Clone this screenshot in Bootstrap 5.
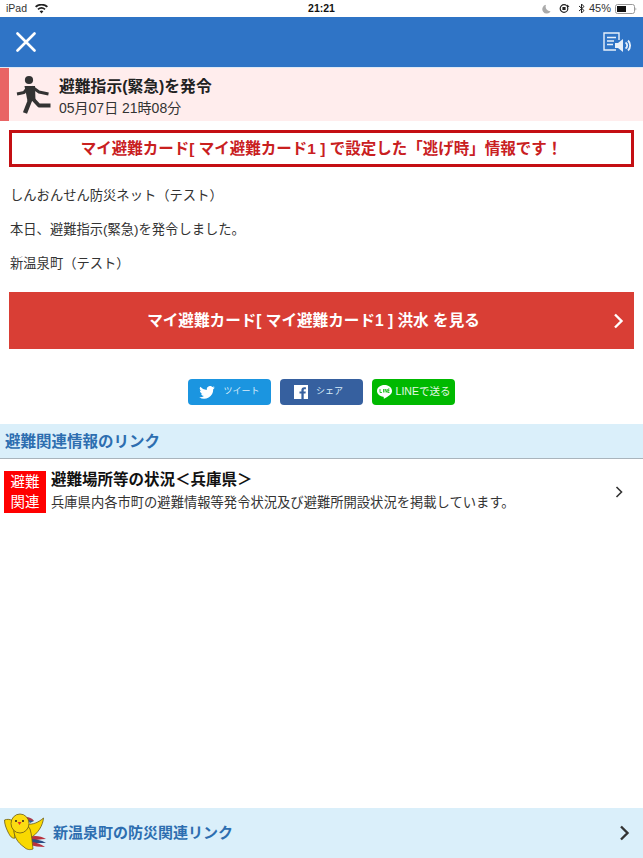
<!DOCTYPE html>
<html lang="ja">
<head>
    <meta charset="UTF-8">
    <title>避難指示</title>
    <link href="https://cdn.jsdelivr.net/npm/bootstrap@5.3.3/dist/css/bootstrap.min.css" rel="stylesheet">
    <style>
        html, body { height: 100%; }
        body {
            font-family: "Liberation Sans", "Noto Sans CJK JP", sans-serif;
            color: #333;
            font-size: 13px;
        }
        .screen { height: 858px; width: 643px; overflow: hidden; }
        .status-bar { height: 17px; font-size: 10.5px; color: #333; padding: 0 6px; line-height: 17px; }
        .status-time { font-size: 10.5px; font-weight: 600; color: #111; }
        .status-left, .status-right { width: 180px; }
        .status-pct { font-size: 11px; }
        .top-bar { height: 50px; background: #2f74c6; padding: 0 12px 0 16px; border-bottom: 1px solid #dfe9f5; box-sizing: content-box; }
        .alert-head { height: 53px; background: #ffeded; border-left: 9px solid #e96464; padding-left: 1px; }
        .runner { flex: none; margin-right: 4px; }
        .alert-text { padding-top: 5px; }
        .alert-title { font-size: 15.8px; font-weight: 700; line-height: 20px; color: #222; }
        .alert-date { font-size: 14px; line-height: 20px; color: #333; margin-top: 1px; }
        .notice-box { height: 37px; margin: 9px 9px 0 9px; border: 3px solid #c40f13; color: #c9201f; font-size: 15.5px; font-weight: 700; line-height: 1; }
        .msg-body { padding: 20px 10px 0; }
        .msg-body p { margin: 0 0 16px; font-size: 13.3px; line-height: 18px; color: #333; }
        .red-btn { height: 57px; margin: 3px 9px 0; background: #d93e35; color: #fff; font-size: 15.6px; font-weight: 700; padding: 0 10px 0 0; }
        .red-btn-label { flex: 1; text-align: center; padding-left: 5px; }
        .share-row { margin-top: 30px; gap: 9px; }
        .share-btn { width: 83px; height: 26px; border-radius: 4px; color: #d9ecfa; font-size: 9px; }
        .share-tw { background: #1b95e0; }
        .share-fb { background: #36609f; padding-right: 6px; }
        .share-line { background: #00b900; color: #e4f8e4; font-size: 10.5px; }
        .sec-head { height: 32px; padding-top: 2px; margin-top: 19px; background: #daeffa; border-bottom: 1px solid #a9b4bc; box-sizing: content-box; padding-left: 5px; color: #2d6eb0; font-size: 15.5px; font-weight: 700; }
        .link-row { height: 54px; padding: 0 20px 0 4px; margin-top: 6px; }
        .hinan-tag { width: 42px; height: 42px; background: #f00; color: #fff; font-size: 14.5px; line-height: 20px; text-align: center; flex: none; padding-top: 1px; }
        .link-text { margin-left: 1px; }
        .link-title { font-size: 15.5px; font-weight: 700; line-height: 20px; color: #111; margin-top: -3px; }
        .link-desc { font-size: 13.3px; line-height: 18px; color: #333; white-space: nowrap; margin-top: 4px; }
        .spacer-area { flex: 1; }
        .foot-bar { height: 50px; background: #daeffa; color: #2d6eb0; font-size: 15px; font-weight: 700; padding: 0 13px 0 0; }
        .foot-bird { flex: none; margin-right: 3px; }
    </style>
</head>
<body>
    <div class="screen d-flex flex-column">
        <div class="status-bar d-flex justify-content-between align-items-center">
            <div class="status-left d-flex align-items-center gap-2">
                <span>iPad</span>
                <svg width="13" height="10" viewBox="0 0 13 10"><path d="M6.5 9.5 4.6 7.3a3 3 0 0 1 3.8 0zM3.5 6 2.4 4.7a6.4 6.4 0 0 1 8.2 0L9.5 6a4.7 4.7 0 0 0-6 0zM1.3 3.5 0 2.2a9.8 9.8 0 0 1 13 0l-1.3 1.3a8 8 0 0 0-10.4 0z" fill="#222"/></svg>
            </div>
            <span class="status-time">21:21</span>
            <div class="status-right d-flex align-items-center justify-content-end gap-1">
                <svg class="me-1" width="9" height="10" viewBox="0 0 9 10"><path d="M4 .8a4.4 4.4 0 1 0 4.6 6.4A4.6 4.6 0 0 1 4 .8z" fill="#aaa"/></svg>
                <svg width="11" height="11" viewBox="0 0 11 11"><circle cx="5" cy="5.500" r="3.800" fill="none" stroke="#222" stroke-width="1.200"/><rect x="3.400" y="4" width="3.200" height="3" fill="#222"/><path d="M8 1.500 10.500 3.500 8 4.500z" fill="#222"/></svg>
                <svg class="ms-1" width="7" height="11" viewBox="0 0 7 11"><path d="M1 3 6 7.500 3.500 10V1L6 3.500 1 8" fill="none" stroke="#222" stroke-width="1"/></svg>
                <span class="status-pct">45%</span>
                <svg width="22" height="10" viewBox="0 0 22 10"><rect x=".5" y=".5" width="19" height="9" rx="2" fill="#fff" stroke="#999"/><rect x="2" y="2" width="9" height="6" fill="#111"/><path d="M20.500 3.500a2 2 0 0 1 0 3z" fill="#999"/></svg>
            </div>
        </div>

        <div class="top-bar d-flex justify-content-between align-items-center">
            <svg width="20" height="20" viewBox="0 0 20 20"><path d="M1.500 1.500 18.500 18.500M18.500 1.500 1.500 18.500" stroke="#fff" stroke-width="2.600" stroke-linecap="round"/></svg>
            <svg width="28" height="21" viewBox="0 0 28 21">
                <path d="M16 8V1H1v17h12" fill="none" stroke="#e8f0fa" stroke-width="1.400"/>
                <path d="M4 5.500h9M4 9h7M4 12.500h6" stroke="#e8f0fa" stroke-width="1.400"/>
                <path d="M12 11h3l5-4v13l-5-4h-3z" fill="#e8f0fa"/>
                <path d="M22.500 10.500a3.500 3.500 0 0 1 0 6M25 8.500a7 7 0 0 1 0 10" fill="none" stroke="#e8f0fa" stroke-width="1.800"/>
            </svg>
        </div>

        <div class="alert-head d-flex align-items-center">
            <svg class="runner" width="45" height="48" viewBox="0 0 45 48">
                <circle cx="19" cy="9" r="4.100" fill="#333"/>
                <path d="M14.500 15h10.500L25.500 30h-8z" fill="#333"/>
                <path d="M7 23 14 21.500 18 16.500M22 16 29 21 38.500 23" fill="none" stroke="#333" stroke-width="3" stroke-linejoin="round"/>
                <path d="M20.500 28 15 42" fill="none" stroke="#333" stroke-width="4.400"/>
                <path d="M22 27 29 34.500 40.500 34.500" fill="none" stroke="#333" stroke-width="3.800" stroke-linejoin="round"/>
            </svg>
            <div class="alert-text">
                <div class="alert-title">避難指示(緊急)を発令</div>
                <div class="alert-date">05月07日 21時08分</div>
            </div>
        </div>

        <div class="notice-box d-flex align-items-center justify-content-center">マイ避難カード[ マイ避難カード1 ] で設定した「逃げ時」情報です！</div>

        <div class="msg-body">
            <p>しんおんせん防災ネット（テスト）</p>
            <p>本日、避難指示(緊急)を発令しました。</p>
            <p>新温泉町（テスト）</p>
        </div>

        <div class="red-btn d-flex align-items-center">
            <span class="red-btn-label">マイ避難カード[ マイ避難カード1 ] 洪水 を見る</span>
            <svg width="11" height="16" viewBox="0 0 11 16"><path d="M2 1.500 8.500 8 2 14.500" fill="none" stroke="#fff" stroke-width="2.400"/></svg>
        </div>

        <div class="share-row d-flex justify-content-center">
            <div class="share-btn share-tw d-flex align-items-center justify-content-center gap-2">
                <svg width="16" height="13" viewBox="0 0 24 20"><path d="M24 2.400a9.800 9.800 0 0 1-2.800.8A4.900 4.900 0 0 0 23.300.5a9.800 9.800 0 0 1-3.100 1.200 4.900 4.900 0 0 0-8.400 4.500A14 14 0 0 1 1.700 1a4.900 4.900 0 0 0 1.500 6.600 4.900 4.900 0 0 1-2.200-.6c0 2.400 1.700 4.400 3.900 4.900a4.900 4.900 0 0 1-2.200.1 4.900 4.900 0 0 0 4.600 3.400A9.900 9.900 0 0 1 0 17.400 14 14 0 0 0 21.500 5a10 10 0 0 0 2.500-2.600z" fill="#fff"/></svg>
                <span>ツイート</span>
            </div>
            <div class="share-btn share-fb d-flex align-items-center justify-content-center gap-2">
                <svg width="14" height="14" viewBox="0 0 14 14"><rect width="14" height="14" fill="#fff"/><path d="M9.700 14V8.600h1.800l.3-2.100H9.700V5.200c0-.6.200-1 1-1h1.200V2.300c-.2 0-.9-.1-1.700-.1-1.700 0-2.800 1-2.800 2.900v1.400H5.500v2.100h1.900V14z" fill="#36609f"/></svg>
                <span>シェア</span>
            </div>
            <div class="share-btn share-line d-flex align-items-center justify-content-center gap-1">
                <svg width="15" height="14" viewBox="0 0 15 14"><path d="M7.500 0C3.400 0 0 2.600 0 5.900c0 2.900 2.700 5.300 6.300 5.800.6.100.5.500.4 1.600 0 .4.300.6.800.3 1-.5 5.600-3.200 6.800-5C14.700 7.800 15 6.900 15 5.900 15 2.600 11.600 0 7.500 0z" fill="#fff"/><path d="M3 4v3.500h2M6.500 4v3.500M8 7.500V4l2 3.500V4M12.500 4H11v3.500h1.500M11 5.700h1.500" fill="none" stroke="#00b900" stroke-width=".8"/></svg>
                <span>LINEで送る</span>
            </div>
        </div>

        <div class="sec-head d-flex align-items-center">避難関連情報のリンク</div>

        <div class="link-row d-flex align-items-center gap-1">
            <div class="hinan-tag">避難<br>関連</div>
            <div class="link-text flex-grow-1">
                <div class="link-title">避難場所等の状況＜兵庫県＞</div>
                <div class="link-desc">兵庫県内各市町の避難情報等発令状況及び避難所開設状況を掲載しています。</div>
            </div>
            <svg width="8" height="12" viewBox="0 0 8 12"><path d="M1.500 1 6.500 6 1.500 11" fill="none" stroke="#333" stroke-width="1.600"/></svg>
        </div>

        <div class="spacer-area"></div>

        <div class="foot-bar d-flex align-items-center">
            <svg class="foot-bird" width="50" height="50" viewBox="0 0 50 50">
                <!-- tail -->
                <path d="M29 29C35 27 41 28 46 31 40 31 35 32 31 33z" fill="#b8323f"/>
                <path d="M30 31C36 31 41 32 46 35 40 35 35 35 31 35z" fill="#2b4f86"/>
                <path d="M30 34C36 34 41 36 45 39 39 39 34 38 30 37z" fill="#b8323f"/>
                <!-- crest -->
                <path d="M26 9C29 9 32 10 34 13L28 13z" fill="#a83a4a"/>
                <path d="M28 12 34 13 30 15z" fill="#2b5c92"/>
                <!-- wings -->
                <path d="M4.500 12C7 11 10 11 13 13L15 30C12 31 10 28 8 24 6 20 4.500 16 4.500 12z" fill="#f9d900" stroke="#6b5a14" stroke-width=".8"/>
                <path d="M43.500 10C43 17 38 26 30 30L27 16C33 17 39 14 43.500 10z" fill="#f9d900" stroke="#6b5a14" stroke-width=".8"/>
                <!-- body -->
                <path d="M14 20C17 15 27 15 30 21 32 27 32 34 33 41 30 42 27 42 24 39 18 35 13 28 14 20z" fill="#f9d900" stroke="#6b5a14" stroke-width=".8"/>
                <!-- head -->
                <ellipse cx="20" cy="15.500" rx="9" ry="9.500" fill="#fbdc12" stroke="#6b5a14" stroke-width=".8"/>
                <circle cx="16" cy="13" r="1" fill="#222"/><circle cx="23" cy="13" r="1" fill="#222"/>
                <path d="M17.500 14h4l-2 3z" fill="#e2332a"/>
            </svg>
            <span class="flex-grow-1">新温泉町の防災関連リンク</span>
            <svg width="11" height="16" viewBox="0 0 11 16"><path d="M2 1.500 8.500 8 2 14.500" fill="none" stroke="#333" stroke-width="2.400"/></svg>
        </div>
    </div>
    <script src="https://cdn.jsdelivr.net/npm/bootstrap@5.3.3/dist/js/bootstrap.bundle.min.js"></script>
</body>
</html>
